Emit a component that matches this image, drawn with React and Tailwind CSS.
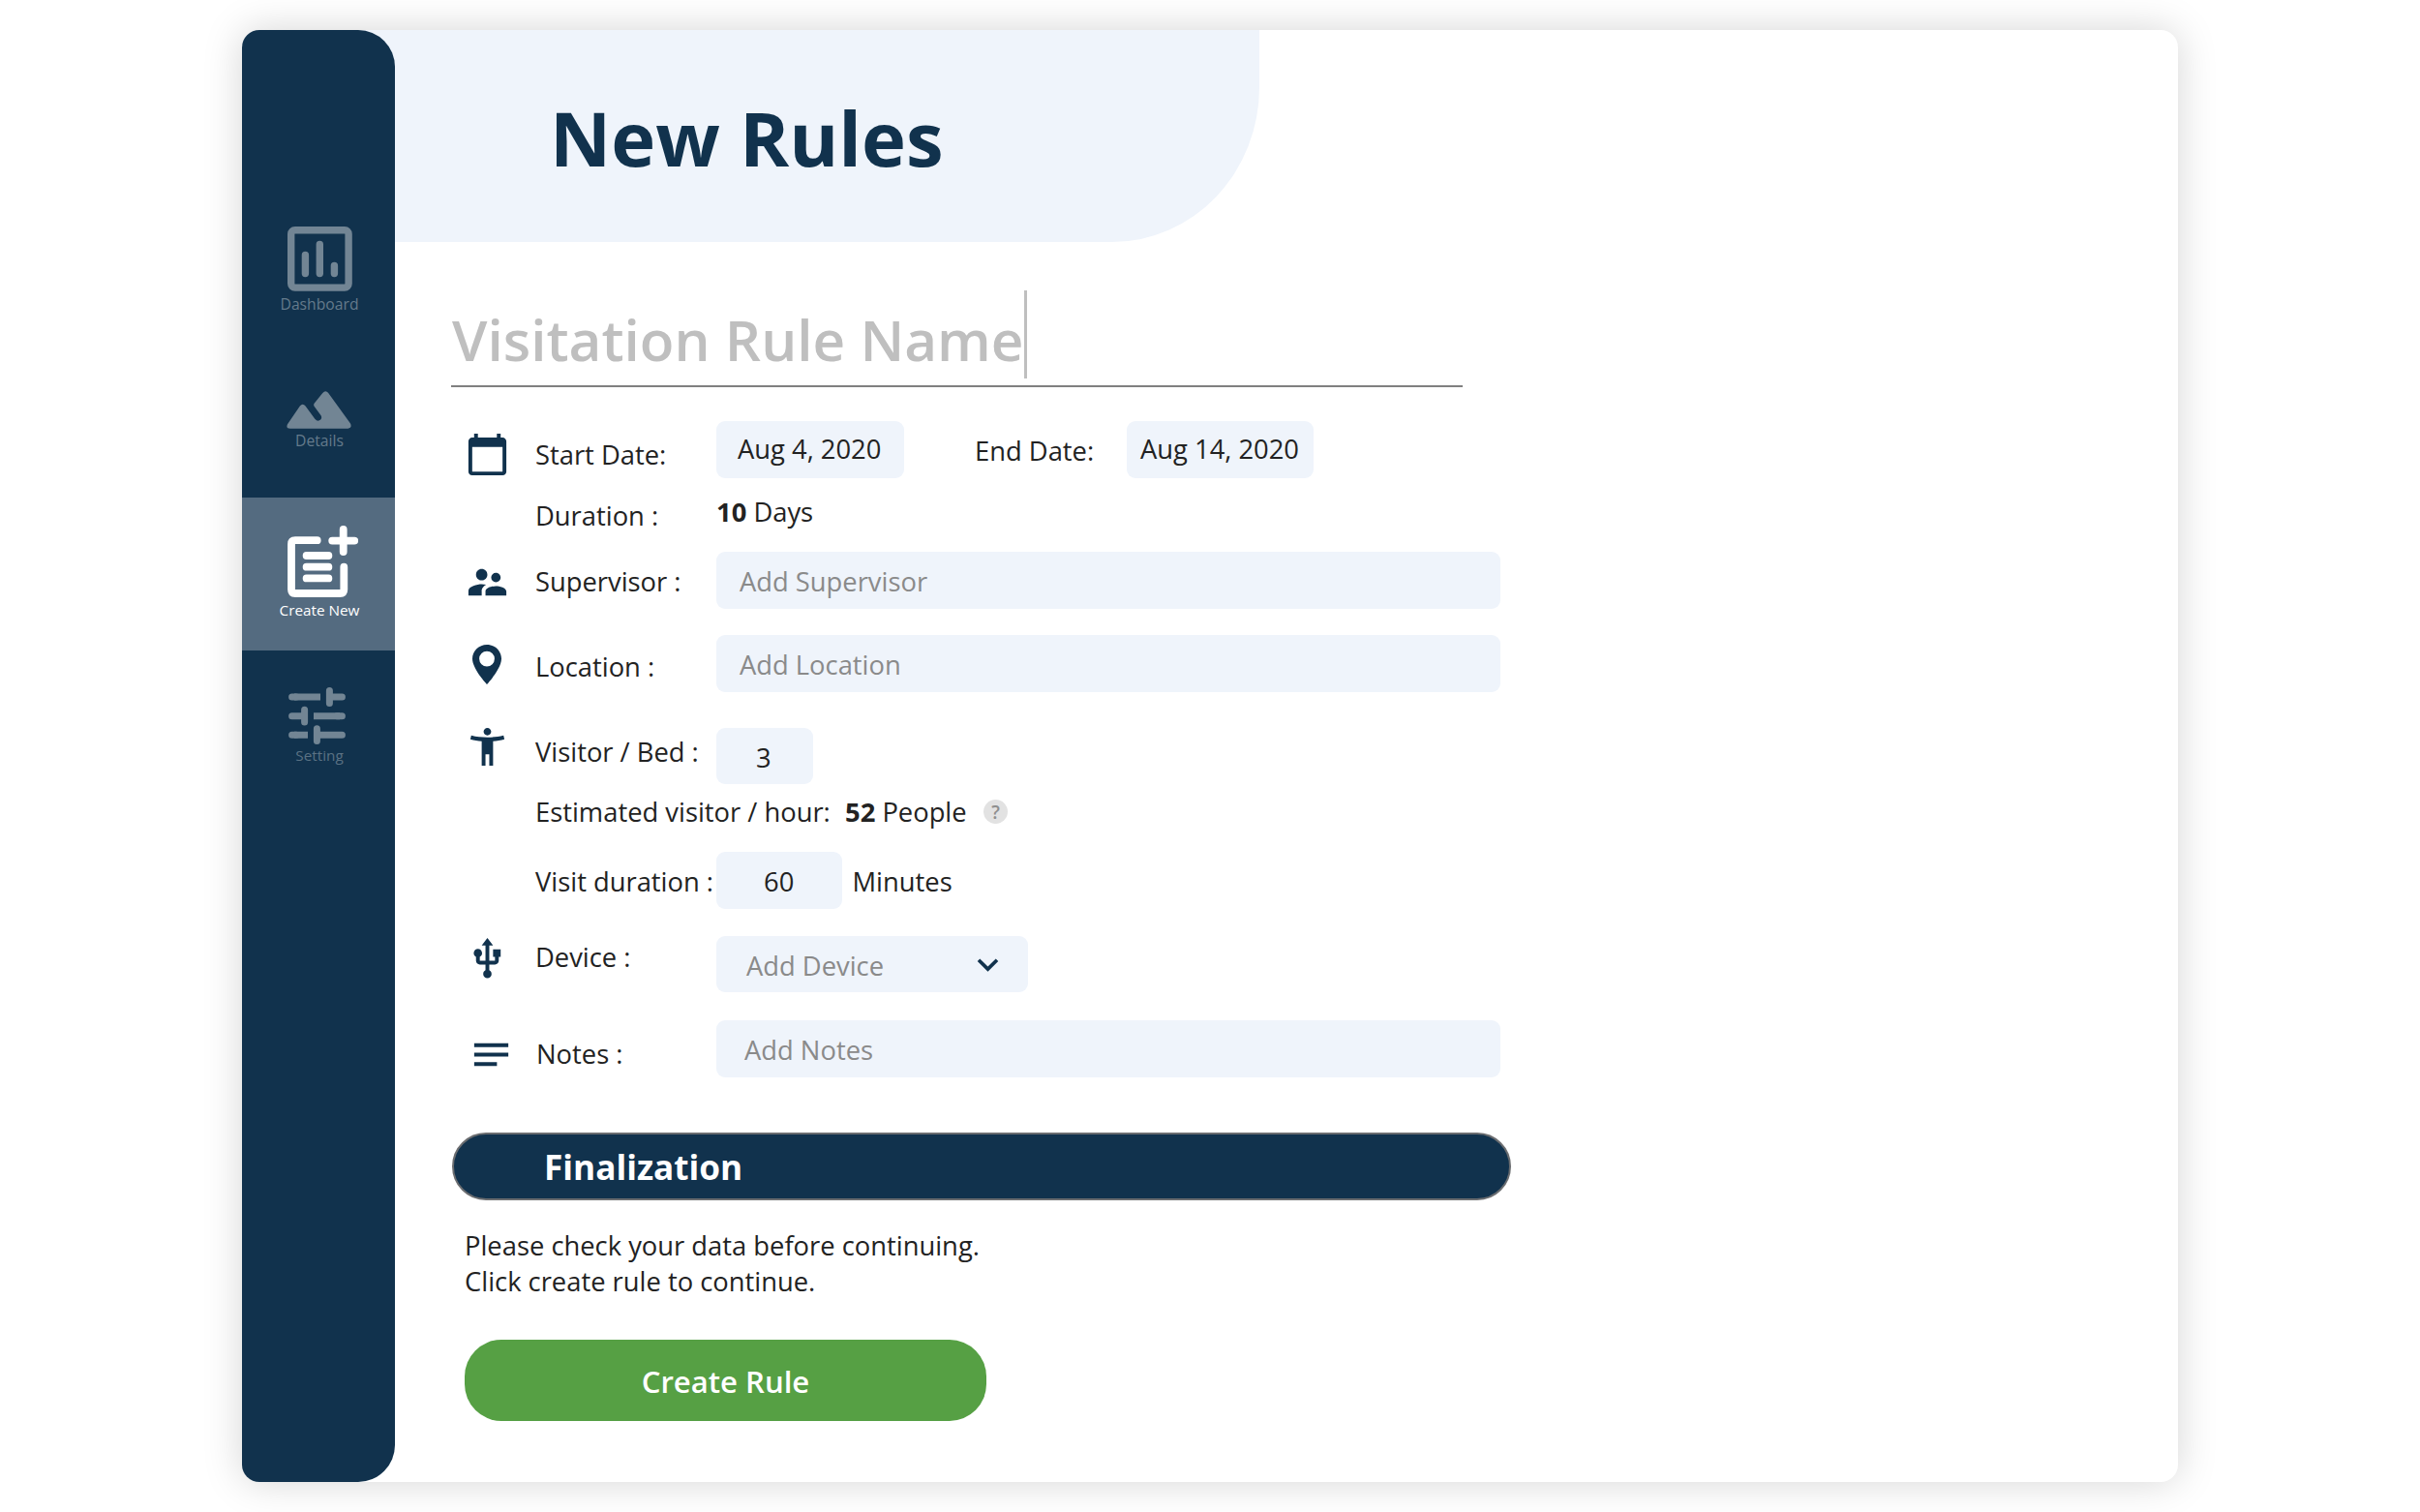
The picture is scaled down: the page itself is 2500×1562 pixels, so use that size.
import React from "react";
import {
  MdCalendarToday,
  MdSupervisorAccount,
  MdAccessibilityNew,
  MdUsb,
  MdNotes,
  MdKeyboardArrowDown,
} from "react-icons/md";

function DashboardIcon() {
  return (
    <svg width="67" height="67" viewBox="0 0 67 67" fill="none" stroke="currentColor" strokeWidth="7.4">
      <rect x="3.7" y="3.7" width="59.4" height="59.4" rx="4" />
      <path d="M18.4 29.5V48.5M33.3 18.5V48.5M48.4 40.5V48.5" strokeLinecap="round" />
    </svg>
  );
}

function DetailsIcon() {
  return (
    <svg className="-ml-[2px]" width="67" height="39" viewBox="0 0 67 39" fill="currentColor">
      <path d="M1 34.3 13.8 15.5Q16.7 12 19.6 15.5L29.3 28.8Q32.3 32.2 35.2 29.6Q37 27.4 35.4 25L28.6 15.8Q27.6 14.2 28.8 12.6L37.3 1.9Q40.3 -1.4 43.2 1.9L66 33.6Q68 38.4 63.4 38.7H3.8Q-1 38.4 1 34.3Z" />
    </svg>
  );
}

function CreateIcon() {
  return (
    <svg width="73" height="74" viewBox="0 0 73 74" fill="none" stroke="currentColor" strokeWidth="7.8" strokeLinecap="round">
      <path d="M30.7 15.2H8Q4 15.2 4 19.2V66Q4 70 8 70H54.3Q58.3 70 58.3 66V42.7" />
      <path d="M46.2 15.6H69.2M57.7 4V27" />
      <path d="M19.6 31H42.4M19.6 42.7H42.4M19.6 54.4H42.4" />
    </svg>
  );
}

function SettingIcon() {
  return (
    <svg className="-ml-[3px]" width="59" height="60" viewBox="0 0 59 60" fill="none" stroke="currentColor" strokeWidth="7" strokeLinecap="round">
      <path d="M42.4 3.6V16.4M42.4 10H55.4M16.6 23.2V36M3.6 29.7H16.6M29.4 42.8V55.6M29.4 49.2H55.4" />
      <path d="M3.6 10H8M3.6 49.2H8M55.4 29.7H50" />
      <path d="M6 10H33M6 49.2H20M26 29.7H53" strokeLinecap="butt" />
    </svg>
  );
}

function PinIcon() {
  return (
    <svg className="ml-2 mt-[10px]" width="30" height="41" viewBox="0 0 30 41" fill="currentColor">
      <path
        fillRule="evenodd"
        d="M15 0C6.700 0 0 6.600 0 14.600C0 25.200 15 41 15 41S30 25.200 30 14.600C30 6.600 23.300 0 15 0ZM15 6.700A7.900 7.900 0 1 1 15 22.500A7.900 7.900 0 1 1 15 6.700Z"
      />
    </svg>
  );
}

function Row({ className, icon, label, labelClass, children }) {
  return (
    <div className={`flex items-start ${className}`}>
      <div className="w-[73px] shrink-0 text-[#11324d]">{icon}</div>
      <div className={`w-[187px] shrink-0 whitespace-nowrap ${labelClass}`}>{label}</div>
      {children}
    </div>
  );
}

function Field({ className, children }) {
  return <div className={`flex h-[58.500px] items-start whitespace-nowrap rounded-[9px] bg-[#eff4fb] ${className}`}>{children}</div>;
}

export default function App() {
  return (
    <div className="h-[1562px] w-[2500px] overflow-hidden bg-white pl-[250px] pt-[31px] font-['Open_Sans',sans-serif]">
      <div className="flex h-[1500px] w-[2000px] overflow-hidden rounded-[18px] bg-white shadow-[0_0_40px_rgba(0,0,0,0.17)]">
        <nav className="z-10 flex w-[158px] shrink-0 flex-col items-center rounded-r-[38px] bg-[#11324d] pt-[203px] text-[15.700px] leading-5 text-[#728594]">
          <div className="ml-[2px] flex h-[170px] flex-col items-center gap-[3px]">
            <DashboardIcon />
            <span className="text-[#647a8b]">Dashboard</span>
          </div>
          <div className="ml-[2px] flex h-[109.500px] flex-col items-center gap-[2px]">
            <DetailsIcon />
            <span className="text-[#647a8b]">Details</span>
          </div>
          <div className="flex h-[158px] w-full flex-col items-center gap-[3px] bg-[#546b80] pt-[29.500px] text-white">
            <div className="ml-[9px]">
              <CreateIcon />
            </div>
            <span className="ml-[2px] text-[15.300px]">Create New</span>
          </div>
          <div className="flex flex-col items-center pt-[38.500px]">
            <SettingIcon />
            <span className="ml-[2px] text-[15.300px] text-[#5a7183]">Setting</span>
          </div>
        </nav>

        <main className="flex-1 text-[27.350px] leading-[38px] text-[#222222]">
          <header className="-ml-10 h-[219px] w-[933px] rounded-br-[152px_160px] bg-[#eff4fb] pl-[200px] pt-[71px]">
            <h1 className="text-[77.750px] font-bold leading-[80px] text-[#11324d]">New Rules</h1>
          </header>

          <div className="ml-[58px] mt-[50px] flex h-[100px] w-[1045px] items-start border-b-2 border-[#808080] text-[58.450px] font-semibold leading-[60px] text-[#bfbfbf]">
            <span className="ml-[1px] mt-[21px]">Visitation Rule Name</span>
            <span className="h-[91px] w-[3px] bg-[#bfbfbf]" />
          </div>

          <form className="ml-[72px] mt-[35px]">
            <Row className="h-[75px]" icon={<MdCalendarToday className="mt-[10.500px]" size={47} />} label="Start Date:" labelClass="mt-4">
              <Field className="w-[194px] pl-[22px] pt-[10px]">Aug 4, 2020</Field>
              <div className="ml-[73px] mt-3 w-[157px]">End Date:</div>
              <Field className="w-[193px] pl-[14px] pt-[10px]">Aug 14, 2020</Field>
            </Row>
            <Row className="h-[60px]" label="Duration :" labelClass="mt-1">
              <div>
                <b>10</b> Days
              </div>
            </Row>
            <Row className="h-[86px]" icon={<MdSupervisorAccount className="mt-2" size={47} />} label="Supervisor :" labelClass="mt-3">
              <Field className="w-[810px] pl-6 pt-3 text-[#8a8a8a]">Add Supervisor</Field>
            </Row>
            <Row className="h-[91px]" icon={<PinIcon />} label="Location :" labelClass="mt-[14px]">
              <Field className="w-[810px] pl-6 pt-3 text-[#8a8a8a]">Add Location</Field>
            </Row>
            <Row className="h-[73px]" icon={<MdAccessibilityNew className="mt-[0.500px]" size={47} />} label="Visitor / Bed :" labelClass="mt-[11px]">
              <Field className="mt-[4.500px] w-[100px] pl-[41px] pt-3">3</Field>
            </Row>
            <div className="ml-[73px] flex h-[60px] items-start">
              <span className="w-[320px]">Estimated visitor / hour:</span>
              <span className="w-[143px]">
                <b>52</b> People
              </span>
              <span className="mt-[6px] flex size-[25px] items-center justify-center rounded-full bg-[#e2e2e2] text-[19px] font-semibold text-[#8f8f8f]">?</span>
            </div>
            <Row className="h-[86px]" label="Visit duration :" labelClass="mt-3">
              <Field className="w-[129.500px] pl-[49px] pt-3">60</Field>
              <div className="ml-[11px] mt-3">Minutes</div>
            </Row>
            <Row className="h-[88px]" icon={<MdUsb className="mt-[0.500px]" size={47} />} label="Device :" labelClass="mt-1">
              <Field className="mt-[0.500px] w-[322px] justify-between pl-[31px] pr-5 pt-3 text-[#8a8a8a]">
                Add Device
                <MdKeyboardArrowDown className="-mt-[4px] text-[#11324d]" size={43} />
              </Field>
            </Row>
            <Row className="h-[116px]" icon={<MdNotes className="ml-1 mt-3" size={47} />} label="Notes :" labelClass="mt-4 pl-[1px]">
              <Field className="w-[810px] pl-[29px] pt-3 text-[#8a8a8a]">Add Notes</Field>
            </Row>
          </form>

          <h2 className="ml-[59px] h-[70px] w-[1094px] rounded-[35px] border-2 border-[#6b6d70] bg-[#11324d] pl-[93px] pt-[15px] text-[35.200px] font-bold leading-9 text-white">
            Finalization
          </h2>
          <p className="ml-[72px] mt-[28px] leading-[37px]">
            Please check your data before continuing.
            <br />
            Click create rule to continue.
          </p>
          <button className="ml-[72px] mt-[42px] flex h-[84px] w-[539px] items-center justify-center rounded-[38px] bg-[#56a044] pt-[2px] text-[31.100px] font-semibold text-white">
            Create Rule
          </button>
        </main>
      </div>
    </div>
  );
}
